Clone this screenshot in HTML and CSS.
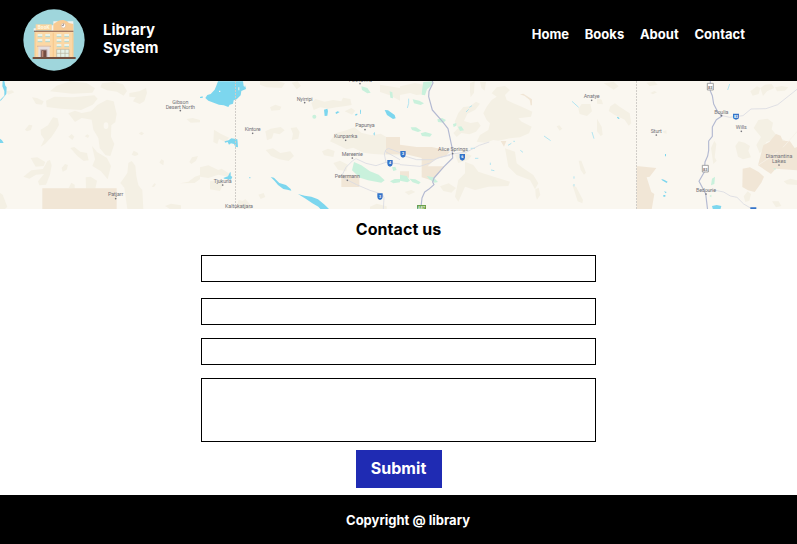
FILE: index.html
```html
<!DOCTYPE html>
<html lang="en">
<head>
<meta charset="utf-8">
<title>Library System - Contact</title>
<link rel="stylesheet" href="styles.css">
</head>
<body>
<header class="header">
  <a class="brand">
    <svg class="logo" viewBox="10 11 186 186" aria-hidden="true">
      <circle cx="103" cy="104" r="92" fill="#9fd6dc"/>
      <path fill="#f3f3ee" d="M42 69h7v7h-7zM95 60h6v-12h18v28H95zM143 48h18v28h-18z"/>
      <path fill="#fcd8a5" d="M45 76h116v80H45z"/>
      <path fill="#fbd6a0" d="M48 57h48v18H48z"/>
      <path fill="#f8cb94" d="M101 76V56l13-8 7-3 10-1 9 3 8 6 13 3v20z"/>
      <path fill="#f8cb90" d="M99 82h4v74h-4zM45 82h3v74h-3zM158 82h3v74h-3z"/>
      <path fill="#84594b" d="M43 76h118v3H43z"/>
      <text class="sign" x="54" y="71" textLength="36">BooK</text>
      <circle cx="131" cy="61" r="7" fill="#fff" stroke="#dbb794" stroke-width="2"/>
      <path d="M131 55v6h-5" fill="none" stroke="#6b514a" stroke-width="2"/>
      <path fill="#eaf3ea" d="M54 86h14v8H54zM77 86h14v8H77zM54 101h14v8H54zM77 101h14v8H77zM111 86h14v8h-14zM134 86h14v8h-14zM111 101h14v8h-14zM134 101h14v8h-14zM111 116h14v8h-14zM134 116h14v8h-14z"/>
      <path stroke="#a5cfc8" stroke-width="2.500" d="M54 94h14M77 94h14M54 109h14M77 109h14M111 94h14M134 94h14M111 109h14M134 109h14M111 124h14M134 124h14"/>
      <path fill="#dcbda6" d="M52 121h42v4H52z"/>
      <path fill="#e6dfe0" d="M56 124h34v32H56z"/>
      <path fill="#b9a9a9" d="M62 132h21v24H62z"/>
      <path fill="#754c40" d="M65 135h15v21H65z"/>
      <path fill="#bd8b77" d="M67 137h4v19h-4z"/>
      <path fill="#e6f2e8" stroke="#b9b29c" stroke-width="2" d="M111 132h37v24h-37zM123 132v24M136 132v24M111 144h37"/>
      <path fill="#72503f" d="M39 155h129v6H39z"/>
    </svg>
    <span class="brand-name">Library<br>System</span>
  </a>
  <nav class="nav"><a>Home</a><a>Books</a><a>About</a><a>Contact</a></nav>
</header>

<svg class="map" viewBox="0 0 797 128" role="img" aria-label="Map of central Australia">
  <!-- West -->
  <g transform="translate(0 -3) scale(.33333)">
    <g class="scrub">
      <path d="M150 40l20-17 40-13 50 5 25 16-8 13-60 3zM138 68l25-12 55 2 65-6 10 10-15 18-35 16-60-4-43-5zM96 58l15 2 20 10-5 10-18-2zM205 106l20-8 20 7 28-5 20-20 28-15 20 5 9 38-4 24-12 10-1 34 10 22-12 36-14-2-18-22-4-30-15-25-5-30-30-5-20 12zM122 155l22-13 15-24 14 3 4 20-12 20-10 15-20 22-13 8 11-22-10-14zM75 155l12-15 10 2-4 14-12 4zM211 210l12-3 18 14 20 4 5 22-15 2-18-14zM276 204l15 18 30 18 12 24-10 40-20-24-26-16 8-20zM92 240l20-2 24 14-5 12-24 2zM70 296l24-19 35-4 13-24 8-3 5 16-5 28-12 30-20 2-4-12 18-22-24 2-20 12zM185 270l10-12 9 3-4 14-12 6zM257 298l15-2 19 12-5 24h-28zM370 302l12-17 3-30 10-6 11 14 3 30 6 28 12 16 3 56h-48l-9-64-12-14z"/>
      <path d="M388 45l30-5 20-10 3 14-8 26-14 8-20-8 8-12-19-2zM306 16l35-5 28 8 12 20-10 14-20-12-30-4-20-9zM560 123l18-3 22 6v7l-28 1zM395 230l6-12 12 6 2 6-10 4zM478 254l6-10 8 4-2 14zM568 252l8-14 18-4-6 14-14 10zM540 316l25-5 20-15 15-5v12l-16 12zM205 176l10-8 8 8-6 10zM254 175l8-6 6 4-4 7zM416 167l8-6 8 5-6 6zM455 326l8-10 5 2-6 9zM495 384l18-7 30 5v13h-30zM0 345l8 5 14 36-8 8H0zM18 40l18-3 7 6-18 7zM206 330l8-16 10 6v12z"/>
      <ellipse class="ground" cx="318" cy="143" rx="7" ry="10"/>
    </g>
    <path class="reserve" d="M127 331h223v66H127z"/>
    <path class="water" d="M8 9l5 0 3 14 4 5-1 20-8 10-10 12 0-5 12-12 0-14-6-14zM0 182l6 5 5 8H0z"/>
  </g>

  <!-- Kintore to Petermann -->
  <g transform="translate(200 -3) scale(.33333)">
    <g class="scrub">
      <path d="M210 88l16-8 18 6-4 10-26 2zM334 75l12-12 28 8 25-5 25 4 5-11 22 4 4 18-22 4-24 3-24 4-24-4-20 8zM180 8h50l25 8-10 14-45-2-20-8zM275 14l18-4 10 14-13 10zM196 160l16-8 30-5 12 10-15 12-18-4-5 16-15 6zM272 150l18-2 9 14-4 20-20 4 4-18zM197 216l22-5 22 14 30-5 11 14-16 15-28-5-25-10zM390 190l16-24 28-8 30-10 20 16 30 8 28-5 28 16 30 2v47l-20 0-60-4-30-4-30-15-20 5-20-10zM366 220l18-8 20 7-4 18-28-5zM434 100l20-10 12 8-10 12zM42 155l20 12 25 12-10 14-20-10-5 15-12-6zM0 268l25-6 30 14 10-4 25 16-5 8-30-6-30 10-25-4zM30 310l30-5 10 14-10 20-30-5zM175 350l16-5 5 12-14 6zM110 385l6-20 12 4 8-6 18 20v12h-44zM510 386l20-9 30 8v10h-50zM400 255l20-7 24 12-5 20-25-5zM540 20l60 10v38l-30-16-30-10z"/>
    </g>
    <g class="reserve"><path d="M424 291h54v36h-54zM558 177h42v51h-42z"/></g>
    <g class="park">
      <path d="M462 252l22 10 26 18 26 10 18 17-10 7-40-7-24-8-24-22zM570 310l14-7h16v10l-20 3zM576 268l10-2 4 10-10 3zM484 25l18 5 10 14-10 2-16-10zM569 40l8 3 2 18-8-2z"/>
      <circle cx="343" cy="116" r="6"/>
    </g>
    <g class="water">
      <path d="M16 60l6-9 10-3 12-13 5-12 5-13h75l2 14 3 3 1-6 3 12-14 6-2 13-12 12-9 3-2 10-10 3-4 7-14-5-14-2-20-7-12-5zM0 57l8-2v5H0zM74 190l12-3 8-6 18 3 1 8 1 16-8-2-4-8-9-2-6 4-4-8-8 2zM372 95l10-3 2 7-2 14-8 1zM406 104l6-4 7 2-10 6zM554 96l10 1 20 14 3 10-8 2-18-12zM466 108l6-1v4l-6 2zM480 98l3-4v14h-2zM520 168l4-7v12zM212 297l10 2 6 6 10 10 20 6 14 12 2 5-12-3-12-2-16-12-10-12zM294 348l20 5 20 3 20 8 20 16 15 15h-26l-8-9-18-10-20-14zM70 300l14-5 6-12h2v10l5 4-4 8-20-3zM148 297h3v4h-3z"/>
      <path class="ground" d="M57 38h4v4h-4zM115 28h3v9h-3z"/>
    </g>
    <path class="road" d="M600 224l-35-13-8 5-4 12 5 25-30 10-30-7-30-14-10 6-20 20-10 20 2 12 40 20 40 17 38 12 4 10-2 34"/>
    <path class="road" d="M558 253l42 5M555 220l45 25"/>
    <path class="border" d="M106.500 9v386"/>
    <g class="shield"><path d="M562 246h16v11q0 7-8 9-8-2-8-9zM532 346h16v11q0 7-8 9-8-2-8-9z"/></g>
    <g class="shield-no"><text x="570" y="259">4</text><text x="540" y="359">3</text></g>
  </g>

  <!-- Alice Springs -->
  <g transform="translate(400 -3) scale(.33333)">
    <g class="scrub">
      <path d="M0 25l45-10 30 6-5 28-20 2-20-6-30 6zM230 191l10-20 25-15 5-20-10-10-10-20 10-20 15-20 15-10-15-10 15-18 25-4 15 12-15 15 5 15 20 10 25 10 32 15-4 15-38 5 10 10 30 15-8 20-27 12-30 3-35 7-15-2-25 8zM315 211l30 10 5 35 20 15 30 20 15 25-10 18-15-28-40-15-25-25zM195 251l25 10 15 20 30 10 65 20-5 13-60 2-40 10-30-10-20 45-10-15 10-50 20-20zM175 105l15-18 20-2 18-14 12 6-14 18-24 12-10 22 20 6 22-4 8 12-14 18-20 8-24-4-14 12-10-12 14-14-10-20zM165 230l30-5 20 8-10 12-30 10zM535 92l10-14h26l5 22-15 14-22-6zM536 248l8 0 14 36-6 6-10-14zM517 320l12 8 20 38-2 10-14-6zM406 334l10-5 5 22-10 14-4-12zM470 145l8-3 9 10-8 6zM210 15l14-5-2 34-10 14-2-16zM240 12l18 0-4 26-10-8zM120 325l26-9 22 14-14 14-24-5zM14 342l20-6 12 6-20 9z"/>
    </g>
    <g class="reserve">
      <path d="M0 200l50 7 45 0 30 6 25 8-12 12-35 12-20 20h52l-34 35-2 8-34-10V240l-35-8-30-8zM0 280l27 0v20l-27-8zM302 189h17l-7 17zM360 49l10-2 26 17v18h-4l-3-16-15-12z"/>
    </g>
    <g class="park">
      <path d="M70 12l27-2-4 14-12 10-6 18-10-2 2-20zM38 64l20 4 14 8-10 5-20-5zM112 124l14-4 12 6-8 8-16-2zM32 148l16 0 16 10-10 4-18-6zM62 166l14-4 20 6-6 8-24-2zM174 146l10-1 8 12-12 2zM159 138l10-3v8l-8 4zM0 290l20 4 10 14-8 5-22-5zM28 302l18 2 16 9-6 6-18-6zM80 294l20 4 14 14-10 2-16-10z"/>
    </g>
    <g class="stream"><path d="M26 62v14l-4 14M198 102l8-8M208 88l8-5M516 70l20 18M576 162l6 20M432 174l20 14M340 190h5M324 202l10-6M212 211h13M225 241h10M271 254v7M273 276l10 2M522 295v7M522 318v7M361 217l8 6"/></g>
    <path class="road" d="M0 230l50 15h50l50-16 50-7 38-20 30-10M0 260l60 5 30-10 25-16 35-7"/>
    <path class="highway" d="M97 9l2 6-12 25-1 16 11 40 30 34 17 22 12 56 2 32-26 26-30 34-4 12 4 8-16 14-12 8-8 18-4 35"/>
    <g class="shield"><path d="M1 219h16v11q0 7-8 9-8-2-8-9zM179 228h16v11q0 7-8 9-8-2-8-9z"/></g>
    <g class="shield-no"><text x="9" y="232">2</text><text x="187" y="241">6</text></g>
    <path fill="#689f4d" d="M51 381h27v14H51z"/>
    <text class="a87" x="64" y="394">A87</text>
  </g>

  <!-- East -->
  <g transform="translate(597 -3) scale(.33333)">
    <g class="scrub">
      <path d="M0 60l14 5 4 14-18-2zM40 85l14-9 14 10 30 20 5 30-8 7-12-18-30-14-18-12zM0 122l14 24 3 24-6 4-11-14zM20 16l30-5 15 14-15 10zM148 14l24-4 10 10-24 4zM460 40l20-15 10 5-5 18-18 5zM490 30l14-10 20-2 8 12-22 10-12 14zM470 150l14-24 28-4 16 12-4 20 20 24 22 10-10 12-30-14-18 6-10 24-10 10-10-25 14-24zM415 204l10-14 18 4 16 10-5 14 8 20-24 6-15-8zM342 210l10-22 6 10-5 40 6 10-10 10zM440 355l12-15 10 8-5 20-12 4zM560 310l20-8 20 5v14l-30-2zM525 370l20 0 8 14-16 4zM534 28l20-4 20 4-10 10-24 2zM160 45l12-6 8 4-12 6zM198 160l10-3 1 10-9-2z"/>
    </g>
    <g class="reserve">
      <path d="M119 264l59 6-20 26-9 2 14 44 9 6-8 47h-45zM437 272l22-4 26 14 16 14-8 18-20 28-20-5-17-10zM483 262l16-60 18-10 20-24 14 5 6 15 22 2 14 20 7-3v70l-64-5-14 16z"/>
    </g>
    <path class="park" d="M345 302l9-6-2 22-10 4zM528 272l8-2v5zM337 354l6-4v8z"/>
    <path class="water" d="M345 384l14-3 14 3-3 11h-22zM193 303l8 2 11 6-3 4-14-8zM201 340l8 2-3 4zM199 351h6v5h-6zM204 228h3v7h-3zM62 116l6 5-3 2-5-4z"/>
    <path class="stream" d="M398 18l-6 18"/>
    <path class="road-soft" d="M558 208l20-22 22-25M483 262l60-40"/>
    <path class="road" d="M376 113l22 5 40-5 24-20 45-1 35-12 58-46M330 338h30l20 4 20 12 20 4 20 20 24 14"/>
    <path class="highway" d="M340 9v30l6 14 4 25 14 27 12 8-18 12-12 22v28l-11 14v28l-3 17-8 18-2 30-16 28 20 37 6 50"/>
    <path class="border" d="M118.500 9v386"/>
    <g class="route"><path d="M331 16h18v20h-18zM316 262h18v20h-18z"/></g>
    <g class="route-no"><text x="340" y="32">83</text><text x="325" y="278">83</text></g>
    <g class="shield"><path d="M408 107h18v11q0 6-9 7-9-1-9-7zM460 388h18v7h-18z"/></g>
    <g class="shield-no"><text x="417" y="119">83</text></g>
  </g>

  <g class="place" transform="translate(0 -3) scale(.33333)">
    <text x="541" y="77" textLength="48">Gibson</text><text x="541" y="92" textLength="88">Desert North</text><circle cx="541" cy="98" r="2.500"/>
    <text x="347" y="354" textLength="46">Patjarr</text><circle cx="347" cy="362" r="2.500"/>
    <text x="914" y="68" textLength="48">Nyirripi</text><circle cx="914" cy="74" r="2.500"/>
    <text x="758" y="160" textLength="48">Kintore</text><circle cx="758" cy="166" r="2.500"/>
    <text x="668" y="315" textLength="54">Tjukurla</text><circle cx="668" cy="321" r="2.500"/>
    <text x="717" y="391" textLength="84">Kaltukatjara</text>
    <text x="1080" y="11" textLength="72">Yuelamu</text><circle cx="1080" cy="17" r="2.500"/>
    <text x="1095" y="147" textLength="58">Papunya</text><circle cx="1095" cy="155" r="2.500"/>
    <text x="1037" y="179" textLength="70">Kunparrka</text><circle cx="1037" cy="187" r="2.500"/>
    <text x="1057" y="235" textLength="63">Mereenie</text><circle cx="1057" cy="240" r="2.500"/>
    <text x="1042" y="301" textLength="75">Petermann</text><circle cx="1042" cy="307" r="2.500"/>
    <text x="1359" y="220" textLength="90">Alice Springs</text><circle cx="1358" cy="227" r="2.500"/>
    <text x="1775" y="60" textLength="48">Anatye</text><circle cx="1775" cy="67" r="2.500"/>
    <text x="1969" y="165" textLength="33">Sturt</text><circle cx="1969" cy="171" r="2.500"/>
    <text x="2164" y="107" textLength="43">Boulia</text><circle cx="2164" cy="113" r="2.500"/>
    <text x="2224" y="154" textLength="33">Wills</text><circle cx="2224" cy="160" r="2.500"/>
    <text x="2337" y="239" textLength="80">Diamantina</text><text x="2337" y="254" textLength="42">Lakes</text><circle cx="2337" cy="261" r="2.500"/>
    <text x="2118" y="343" textLength="60">Bedourie</text><circle cx="2118" cy="348" r="2.500"/>
  </g>
</svg>

<main class="contact">
  <h1 class="title">Contact us</h1>
  <form class="form">
    <input class="field field-first" type="text" aria-label="Name">
    <input class="field" type="text" aria-label="Email">
    <input class="field" type="text" aria-label="Subject">
    <textarea class="field message" aria-label="Message"></textarea>
    <button class="submit" type="button">Submit</button>
  </form>
</main>
<footer class="footer">Copyright @ library</footer>
</body>
</html>
```
FILE: styles.css
```css
* { box-sizing: border-box; }
body {
  margin: 0;
  height: 544px;
  display: flex;
  flex-direction: column;
  overflow: hidden;
  background: #fff;
  color: #000;
  font-family: Inter, "Liberation Sans", sans-serif;
  font-weight: 700;
}
.header {
  height: 81px;
  flex: none;
  display: flex;
  justify-content: space-between;
  align-items: flex-start;
  padding: 9px 52px 0 23px;
  background: #000;
  color: #fff;
}
.brand { display: flex; gap: 18px; }
.logo { width: 62px; height: 62px; }
.sign { font: 700 13px Inter, sans-serif; fill: #fffbe8; }
.brand-name { margin-top: 12px; font-size: 15px; line-height: 18px; letter-spacing: .02px; }
.nav { display: flex; gap: 15.7px; margin-top: 17px; font-size: 13px; line-height: 16px; letter-spacing: .02px; }

.map { display: block; flex: none; width: 797px; height: 128px; background: #faf7f0; }
.scrub { fill: #f4f0e4; }
.ground { fill: #faf7f0; }
.reserve { fill: #f1e6d6; }
.park { fill: #c9f1dc; }
.water { fill: #7cd6ee; }
.stream { fill: none; stroke: #a5e1f0; stroke-width: 2.500; }
.road, .road-soft { fill: none; stroke: #dadbe2; stroke-width: 2.500; }
.road-soft { stroke: #f7f1e7; }
.highway { fill: none; stroke: #b4bad2; stroke-width: 3.500; stroke-linejoin: round; }
.border { fill: none; stroke: #d0cdc8; stroke-width: 3; stroke-dasharray: 6 3; }
.shield { fill: #3474c9; }
.shield-no { fill: #fff; font: 700 11px Roboto, sans-serif; text-anchor: middle; }
.route { fill: #fff; stroke: #929292; stroke-width: 2.500; }
.route-no { fill: #777; font: 700 12px Roboto, sans-serif; text-anchor: middle; }
.a87 { fill: #e5f2df; font: 700 12px Roboto, sans-serif; text-anchor: middle; }
.place { fill: #737379; font: 400 16px Roboto, sans-serif; text-anchor: middle; }

.contact { flex: 1; display: flex; flex-direction: column; align-items: center; }
.title { margin: 10px 0 0; font-size: 16px; line-height: 20px; letter-spacing: .06px; }
.form { width: 395px; display: flex; flex-direction: column; align-items: center; gap: 13px; margin-top: 16px; }
.field {
  display: block;
  width: 100%;
  height: 27px;
  margin: 0;
  border: 1px solid #000;
  border-radius: 0;
  background: #fff;
  outline: 0;
}
.field-first { margin-bottom: 3px; }
.message { height: 64px; resize: none; }
.submit {
  width: 86px;
  height: 38px;
  margin-top: -5px;
  padding: 0 0 2px;
  border: 0;
  background: #1f2bb3;
  color: #fff;
  font: 700 16px Inter, sans-serif;
  letter-spacing: .06px;
}
.footer {
  flex: none;
  height: 49px;
  padding-left: 19px;
  background: #000;
  color: #fff;
  font-size: 13px;
  line-height: 51px;
  text-align: center;
}
```
